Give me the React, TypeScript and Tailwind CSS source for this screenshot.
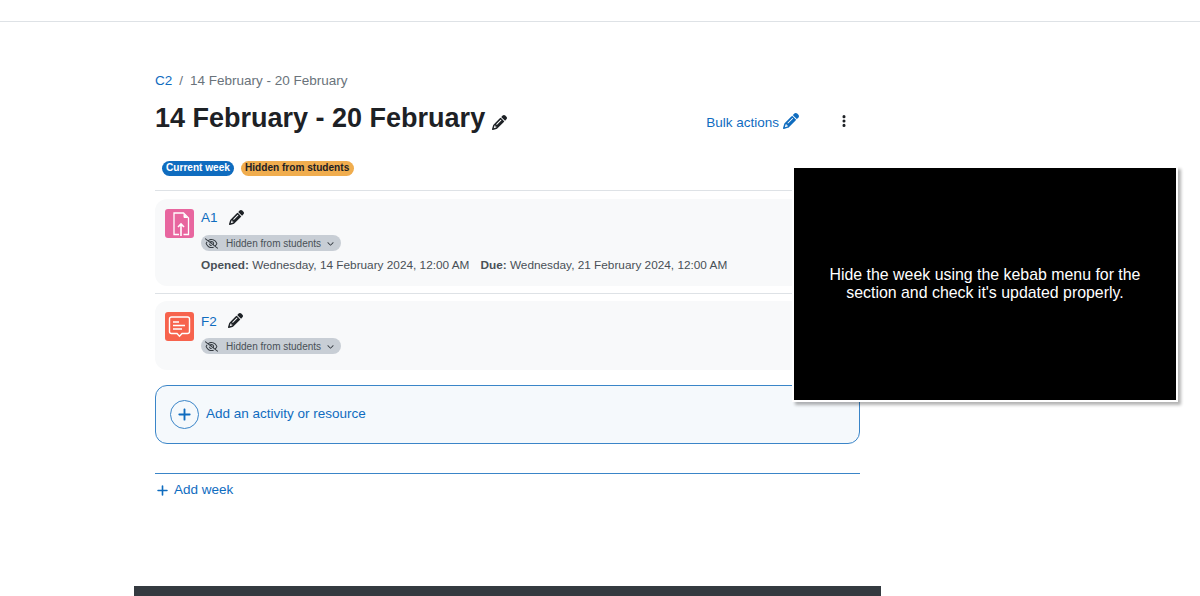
import React from 'react';
import { FaPencil, FaEllipsisVertical, FaRegEyeSlash, FaPlus, FaChevronDown } from 'react-icons/fa6';

function AssignIcon() {
  return (
    <div className="w-[29px] h-[29px] rounded-[3px] bg-[#e8669f] flex items-center justify-center">
      <svg width="24" height="24" viewBox="0 0 24 24" fill="none" stroke="#fff" strokeWidth="1.3">
        <path d="M11 22.500H6V1h9.500l5 5v16.500h-5" />
        <path d="M16 2.500l3 3h-3z" fill="#fff" strokeWidth="1" />
        <path d="M13 24v-12M10 15l3-3 3 3" strokeWidth="1.6" />
      </svg>
    </div>
  );
}

function ForumIcon() {
  return (
    <div className="w-[29px] h-[29px] rounded-[3px] bg-[#f7634d] flex items-center justify-center">
      <svg width="25" height="25" viewBox="0 0 25 25" fill="none" stroke="#fff" strokeWidth="1.4">
        <path d="M4.5 3h16a2 2 0 0 1 2 2v12.500a2 2 0 0 1-2 2h-5.500l-2.500 2.800-2.500-2.800H4.500a2 2 0 0 1-2-2V5a2 2 0 0 1 2-2z" />
        <path d="M6 8h6M6 11.500h12M6 15h9" />
      </svg>
    </div>
  );
}

function HiddenPill() {
  return (
    <div className="inline-flex items-center h-4 w-[140px] rounded-full bg-[#c8ced5] text-[#495057] text-[10px] pl-[4px]">
      <FaRegEyeSlash className="w-[13px] h-[13px] text-[#343a40]" />
      <span className="ml-[8px]">Hidden from students</span>
      <FaChevronDown className="ml-[6px] w-[7px] h-[7px] text-[#343a40]" />
    </div>
  );
}

function ActivityCard({ name, icon, pillGap, nameClass, children, className }: { name: string; icon: React.ReactNode; pillGap: string; nameClass?: string; children?: React.ReactNode; className: string }) {
  return (
    <div className={`rounded-xl bg-[#f8f9fa] flex gap-[7px] pl-[10px] ${className}`}>
      {icon}
      <div className="flex flex-col">
        <div className="flex items-center h-[19px] text-[13.5px] text-[#0f6cbf]">
          <span className={nameClass}>{name}</span>
          <FaPencil className="ml-[11px] -mt-[2px] w-[15px] h-[15px] text-[#1d2125]" />
        </div>
        <div className={`flex ${pillGap}`}><HiddenPill /></div>
        {children}
      </div>
    </div>
  );
}

export default function App() {
  return (
    <div className="relative h-[596px] w-[1200px] overflow-hidden bg-white font-['Liberation_Sans',Arial,sans-serif] text-[#1d2125]">
      <div className="h-[22px] border-b border-[#dee2e6]" />

      <main className="ml-[155px] w-[705px] pt-[51px]">
        <nav className="flex items-center h-4 text-[13.5px] text-[#6a737b]">
          <a className="text-[#0f6cbf]">C2</a>
          <span className="mx-[7px]">/</span>
          <span>14 February - 20 February</span>
        </nav>

        <div className="flex items-center justify-between h-[38px] mt-[11px]">
          <div className="flex items-center">
            <h1 className="-mt-[2px] text-[27px] font-bold leading-[38px]">14 February - 20 February</h1>
            <FaPencil className="ml-[7px] mt-[6px] w-[15px] h-[15px] text-[#1d2125]" />
          </div>
          <div className="flex items-center mr-[8px] mt-[4px]">
            <span className="mt-[4px] text-[13.5px] text-[#0f6cbf]">Bulk actions</span>
            <FaPencil className="ml-[4px] w-[16px] h-[16px] text-[#0f6cbf]" />
            <FaEllipsisVertical className="ml-[37px] w-[16px] h-[14px] text-[#1d2125]" />
          </div>
        </div>

        <div className="flex gap-[7px] pl-[7px] mt-[23px]">
          <span className="h-[15px] rounded-full bg-[#0f6cbf] px-[4px] text-[10.100px] font-bold leading-[14px] text-white">Current week</span>
          <span className="h-[15px] rounded-full bg-[#f0ad4e] pl-[4px] pr-[5px] text-[10.100px] font-bold leading-[14px] text-[#1d2125]">Hidden from students</span>
        </div>

        <div className="mt-[14px] border-t border-[#dee2e6]" />
        <ActivityCard name="A1" icon={<AssignIcon />} pillGap="mt-[7px]" className="mt-[8px] h-[87px] pt-[10px]">
          <div className="mt-[6px] whitespace-nowrap text-[11.800px] text-[#495057]">
            <b>Opened:</b> Wednesday, 14 February 2024, 12:00 AM
            <b className="ml-[11px]">Due:</b> Wednesday, 21 February 2024, 12:00 AM
          </div>
        </ActivityCard>

        <div className="mt-[7px] border-t border-[#dee2e6]" />
        <ActivityCard name="F2" icon={<ForumIcon />} pillGap="mt-[7px]" nameClass="mt-[2px]" className="mt-[7px] h-[69px] pt-[11px]" />

        <div className="mt-[15px] h-[59px] rounded-xl border border-[#3a85c8] bg-[#f5f9fc] flex items-center pl-[14px] text-[13.5px] text-[#0f6cbf]">
          <div className="w-[29px] h-[29px] rounded-full border border-[#3a85c8] flex items-center justify-center">
            <FaPlus className="w-[15px] h-[15px]" />
          </div>
          <span className="ml-[7px]">Add an activity or resource</span>
        </div>

        <div className="mt-[29px] border-t border-[#3a85c8]" />
        <div className="mt-[6px] flex items-center pl-[1px] text-[13.5px] text-[#0f6cbf]">
          <FaPlus className="w-[13px] h-[13px]" />
          <span className="ml-[5px]">Add week</span>
        </div>
      </main>

      <div className="absolute left-[134px] bottom-0 h-[10px] w-[747px] bg-[#343a40]" />

      <div className="absolute left-[792px] top-[166px] w-[386px] h-[236px] border-2 border-white bg-black shadow-[3px_3px_3px_rgba(0,0,0,0.3)] flex items-center justify-center text-center text-[15.900px] leading-[18px] text-white">
        <p>Hide the week using the kebab menu for the<br />section and check it's updated properly.</p>
      </div>
    </div>
  );
}
